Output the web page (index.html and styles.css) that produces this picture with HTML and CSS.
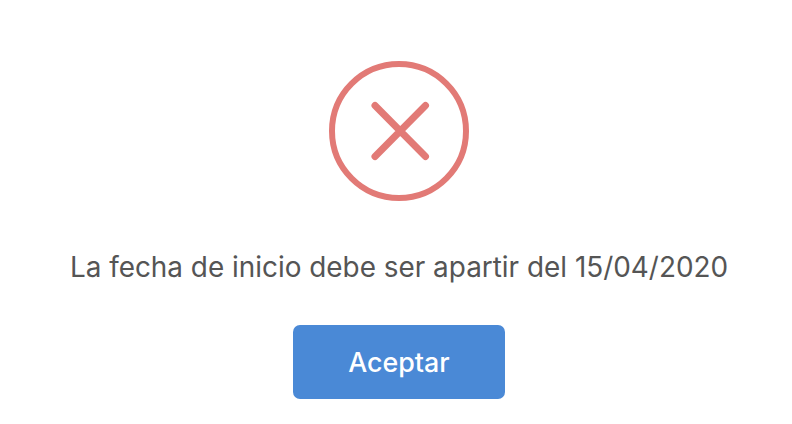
FILE: index.html
```html
<!DOCTYPE html>
<html lang="es">
<head>
    <meta charset="UTF-8">
    <meta name="viewport" content="width=device-width, initial-scale=1.0">
    <title>Error</title>
    <link rel="stylesheet" href="styles.css">
</head>
<body>
    <div class="dialog">
        <svg class="icon" width="140" height="140" viewBox="0 0 140 140">
            <circle cx="70" cy="70" r="67" fill="none" stroke="#e27a76" stroke-width="6"/>
            <path d="M46 44.5 L96.5 95.5 M96.5 44.5 L46 95.5" fill="none" stroke="#e27a76" stroke-width="7" stroke-linecap="round"/>
        </svg>
        <p class="message">La fecha de inicio debe ser apartir del 15/04/2020</p>
        <button class="accept">Aceptar</button>
    </div>
</body>
</html>
```

FILE: styles.css
```css
body {
    margin: 0;
    background-color: #ffffff;
    font-family: Inter, "Liberation Sans", sans-serif;
}
.dialog {
    display: flex;
    flex-direction: column;
    align-items: center;
    padding: 61px 0 0 6px;
    height: 363px;
}
.icon {
    display: block;
}
.message {
    margin: 46px 0 0;
    font-size: 27.9px;
    line-height: 40px;
    color: #555555;
    white-space: nowrap;
}
.accept {
    width: 212px;
    height: 74px;
    margin-top: 38px;
    background-color: #4a89d6;
    border: none;
    border-radius: 7px;
    color: #ffffff;
    font-family: inherit;
    font-size: 26.8px;
    font-weight: 500;
}
```
